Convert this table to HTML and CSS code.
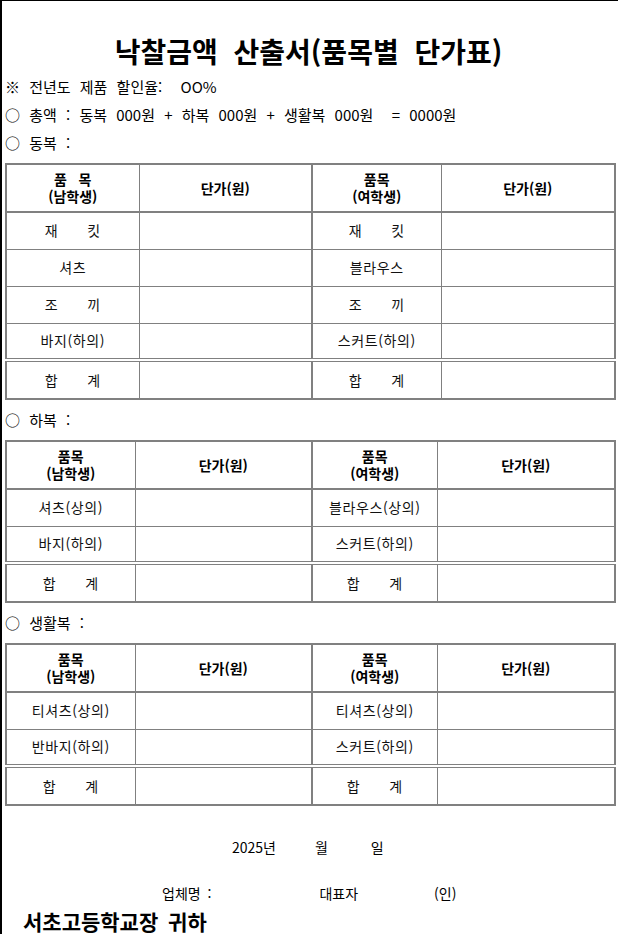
FILE: index.html
```html
<!DOCTYPE html>
<html lang="ko">
<head>
<meta charset="utf-8">
<title>낙찰금액 산출서</title>
<link rel="stylesheet" href="styles.css">
</head>
<body>
<div class="page">
  <h1 class="title">낙찰금액 산출서(품목별 단가표)</h1>
  <p class="line first">※ 전년도 제품 할인율:&nbsp; OO%</p>
  <p class="line">○ 총액 : 동복 000원 + 하복 000원 + 생활복 000원 &nbsp;= 0000원</p>
  <p class="line">○ 동복 :</p>
  <table class="grid">
    <colgroup><col style="width:133px"><col style="width:173px"><col style="width:129px"><col style="width:174px"></colgroup>
    <thead>
      <tr><td>품&nbsp;&nbsp;&nbsp;목<br>(남학생)</td><td>단가(원)</td><td class="mid">품목<br>(여학생)</td><td>단가(원)</td></tr>
    </thead>
    <tbody>
      <tr><td>재　　킷</td><td></td><td class="mid">재　　킷</td><td></td></tr>
      <tr><td>셔츠</td><td></td><td class="mid">블라우스</td><td></td></tr>
      <tr><td>조　　끼</td><td></td><td class="mid">조　　끼</td><td></td></tr>
      <tr><td>바지(하의)</td><td></td><td class="mid">스커트(하의)</td><td></td></tr>
      <tr class="total"><td>합　　계</td><td></td><td class="mid">합　　계</td><td></td></tr>
    </tbody>
  </table>
  <p class="line after">○ 하복 :</p>
  <table class="grid">
    <colgroup><col style="width:129px"><col style="width:177px"><col style="width:125px"><col style="width:178px"></colgroup>
    <thead>
      <tr><td>품목<br>(남학생)</td><td>단가(원)</td><td class="mid">품목<br>(여학생)</td><td>단가(원)</td></tr>
    </thead>
    <tbody>
      <tr><td>셔츠(상의)</td><td></td><td class="mid">블라우스(상의)</td><td></td></tr>
      <tr><td>바지(하의)</td><td></td><td class="mid">스커트(하의)</td><td></td></tr>
      <tr class="total"><td>합　　계</td><td></td><td class="mid">합　　계</td><td></td></tr>
    </tbody>
  </table>
  <p class="line after">○ 생활복 :</p>
  <table class="grid">
    <colgroup><col style="width:129px"><col style="width:177px"><col style="width:125px"><col style="width:178px"></colgroup>
    <thead>
      <tr><td>품목<br>(남학생)</td><td>단가(원)</td><td class="mid">품목<br>(여학생)</td><td>단가(원)</td></tr>
    </thead>
    <tbody>
      <tr><td>티셔츠(상의)</td><td></td><td class="mid">티셔츠(상의)</td><td></td></tr>
      <tr><td>반바지(하의)</td><td></td><td class="mid">스커트(하의)</td><td></td></tr>
      <tr class="total"><td>합　　계</td><td></td><td class="mid">합　　계</td><td></td></tr>
    </tbody>
  </table>
  <p class="date"><span class="year">2025년</span><span class="month">월</span><span class="day">일</span></p>
  <p class="sign"><span class="company">업체명 :</span><span class="rep">대표자</span><span class="seal">(인)</span></p>
  <p class="to">서초고등학교장 귀하</p>
</div>
</body>
</html>
```
FILE: styles.css
```css
html, body {
  margin: 0;
  padding: 0;
  background: #fff;
}
body {
  font-family: "Noto Sans CJK KR", "Noto Sans", sans-serif;
  color: #000;
}
.page {
  border-top: 1px solid #000;
  border-left: 2px solid #000;
  padding-left: 3px;
  min-height: 934px;
  box-sizing: border-box;
}
.title {
  margin: 0;
  padding-top: 34px;
  padding-right: 6px;
  line-height: 32px;
  font-size: 28px;
  font-weight: bold;
  text-align: center;
  word-spacing: 8px;
}
.line {
  margin: 0;
  font-size: 15px;
  line-height: 28px;
  white-space: pre;
  word-spacing: 5px;
}
.line.first {
  margin-top: 6px;
}
.line.after {
  margin-top: 6px;
}
.grid {
  margin-top: 6px;
  width: 609px;
  table-layout: fixed;
  border-collapse: collapse;
  border: 2px solid #808080;
  font-size: 14px;
}
.grid td {
  border: 1px solid #808080;
  padding: 0;
  text-align: center;
  vertical-align: middle;
  line-height: 17px;
  color: #111;
}
.grid tbody td {
  letter-spacing: 0.6px;
}
.grid thead td {
  font-weight: bold;
  border-bottom: 2px solid #808080;
  color: #000;
}
.grid thead tr {
  height: 48px;
}
.grid tbody tr {
  height: 37px;
}
.grid .mid {
  border-left: 2px solid #808080;
}
.grid tbody tr.total {
  height: 39px;
}
.grid tr.total td {
  border-top: 4px double #808080;
}
.date {
  margin: 27px 0 0;
  line-height: 28px;
  font-size: 14px;
  padding-left: 227px;
}
.month {
  margin-left: 39px;
}
.day {
  margin-left: 43px;
}
.sign {
  margin: 18px 0 0;
  line-height: 28px;
  font-size: 14px;
  padding-left: 157px;
  word-spacing: 3px;
}
.rep {
  margin-left: 108px;
}
.seal {
  margin-left: 76px;
}
.to {
  margin: 2px 0 0;
  padding-left: 18px;
  line-height: 24px;
  font-size: 21px;
  font-weight: bold;
  word-spacing: 4px;
}
```
